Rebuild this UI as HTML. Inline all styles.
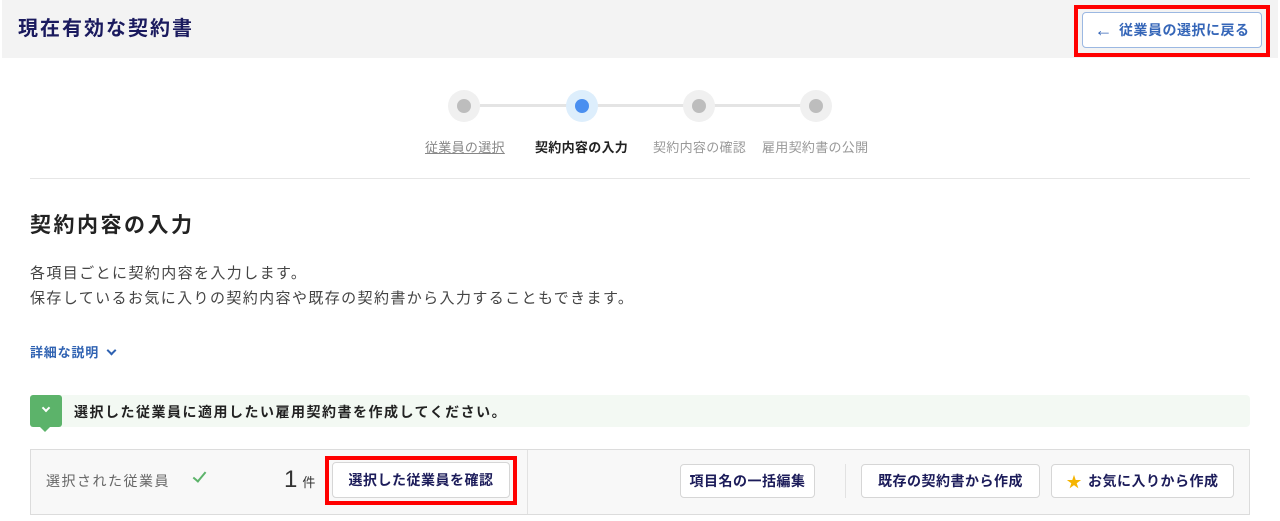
<!DOCTYPE html>
<html><head><meta charset="utf-8"><style>
*{margin:0;padding:0;box-sizing:border-box}
body{width:1280px;height:521px;background:#fff;font-family:"Liberation Sans","Noto Sans CJK JP",sans-serif;position:relative;overflow:hidden;color:#333}
.a{position:absolute;white-space:nowrap}
.btn{position:absolute;background:#fff;border:1px solid #d6d6d6;border-radius:4px;font-size:14px;font-weight:bold;color:#1c1c5a;display:flex;align-items:center;justify-content:center;white-space:nowrap}
.red{position:absolute;border:4px solid #f00}
.c{position:absolute;width:32px;height:32px;border-radius:50%;background:#f0f0f0}
.c i{position:absolute;left:9px;top:9px;width:14px;height:14px;border-radius:50%;background:#bdbdbd}
</style></head><body>
<div class="a" style="left:2px;top:0;width:1276px;height:58px;background:#f3f3f3"></div>
<div class="a" style="left:18px;top:15px;font-size:20px;font-weight:bold;color:#1a1a5e;line-height:28px;letter-spacing:2px">現在有効な契約書</div>
<div class="red" style="left:1074px;top:5px;width:196px;height:52px"></div>
<div class="btn" style="left:1082px;top:12px;width:180px;height:36px;border-color:#9bb8e2;color:#3566b8;font-size:14px;letter-spacing:0.5px"><span style="font-size:18px;font-weight:normal;margin-right:6px">←</span>従業員の選択に戻る</div>

<div class="a" style="left:480px;top:104px;width:336px;height:3px;background:#e4e4e4"></div>
<div class="c" style="left:448px;top:90px"><i></i></div>
<div class="c" style="left:566px;top:90px;background:#ddeefc"><i style="background:#4a8ff0"></i></div>
<div class="c" style="left:683px;top:90px"><i></i></div>
<div class="c" style="left:800px;top:90px"><i></i></div>
<div class="a" style="left:425px;top:137px;font-size:13px;color:#888;text-decoration:underline;letter-spacing:0.3px">従業員の選択</div>
<div class="a" style="left:535px;top:137px;font-size:13px;color:#222;font-weight:bold;letter-spacing:0.3px">契約内容の入力</div>
<div class="a" style="left:653px;top:137px;font-size:13px;color:#999;letter-spacing:0.3px">契約内容の確認</div>
<div class="a" style="left:762px;top:137px;font-size:13px;color:#999;letter-spacing:0.3px">雇用契約書の公開</div>
<div class="a" style="left:30px;top:178px;width:1220px;height:1px;background:#e6e6e6"></div>

<div class="a" style="left:30px;top:211px;font-size:21px;font-weight:bold;color:#222;line-height:30px;letter-spacing:2.5px">契約内容の入力</div>
<div class="a" style="left:30px;top:261px;font-size:15px;line-height:25px;color:#444;letter-spacing:1.4px">各項目ごとに契約内容を入力します。<br>保存しているお気に入りの契約内容や既存の契約書から入力することもできます。</div>
<div class="a" style="left:30px;top:342px;font-size:13px;font-weight:bold;color:#2f62b2;letter-spacing:0.8px">詳細な説明 <span style="display:inline-block;width:7px;height:7px;border-right:2px solid #2f62b2;border-bottom:2px solid #2f62b2;transform:rotate(45deg);margin:0 0 3px 5px"></span></div>

<div class="a" style="left:30px;top:395px;width:1220px;height:32px;background:#f3f9f3;border-radius:4px"></div>
<div class="a" style="left:30px;top:395px;width:32px;height:32px;background:#5cb36a;border-radius:3px"></div>
<div class="a" style="left:40px;top:427px;width:0;height:0;border-left:5px solid transparent;border-right:5px solid transparent;border-top:5px solid #5cb36a"></div>
<div class="a" style="left:43px;top:405px;width:6px;height:6px;border-right:2px solid #fff;border-bottom:2px solid #fff;transform:rotate(45deg)"></div>
<div class="a" style="left:74px;top:402px;font-size:14px;font-weight:bold;color:#222;letter-spacing:1.5px">選択した従業員に適用したい雇用契約書を作成してください。</div>

<div class="a" style="left:30px;top:449px;width:1220px;height:66px;background:#f8f8f8;border:1px solid #dcdcdc"></div>
<div class="a" style="left:527px;top:450px;width:1px;height:64px;background:#e2e2e2"></div>
<div class="a" style="left:46px;top:471px;font-size:14px;color:#666;letter-spacing:1.5px">選択された従業員</div>
<div class="a" style="left:196px;top:469px;width:7px;height:13px;border-right:2px solid #5cb36a;border-bottom:2px solid #5cb36a;transform:rotate(40deg)"></div>
<div class="a" style="left:284px;top:468px;font-size:24px;color:#333;line-height:24px">1<span style="font-size:13px;margin-left:5px">件</span></div>
<div class="red" style="left:325px;top:456px;width:192px;height:49px"></div>
<div class="btn" style="left:332px;top:462px;width:178px;height:36px;letter-spacing:0.5px">選択した従業員を確認</div>
<div class="btn" style="left:680px;top:464px;width:135px;height:34px;letter-spacing:0.5px">項目名の一括編集</div>
<div class="a" style="left:845px;top:464px;width:1px;height:34px;background:#e2e2e2"></div>
<div class="btn" style="left:861px;top:464px;width:179px;height:34px;letter-spacing:0.5px">既存の契約書から作成</div>
<div class="btn" style="left:1051px;top:464px;width:183px;height:34px;letter-spacing:0.5px"><span style="color:#f5b400;font-size:15px;margin-right:6px">★</span>お気に入りから作成</div>
</body></html>
